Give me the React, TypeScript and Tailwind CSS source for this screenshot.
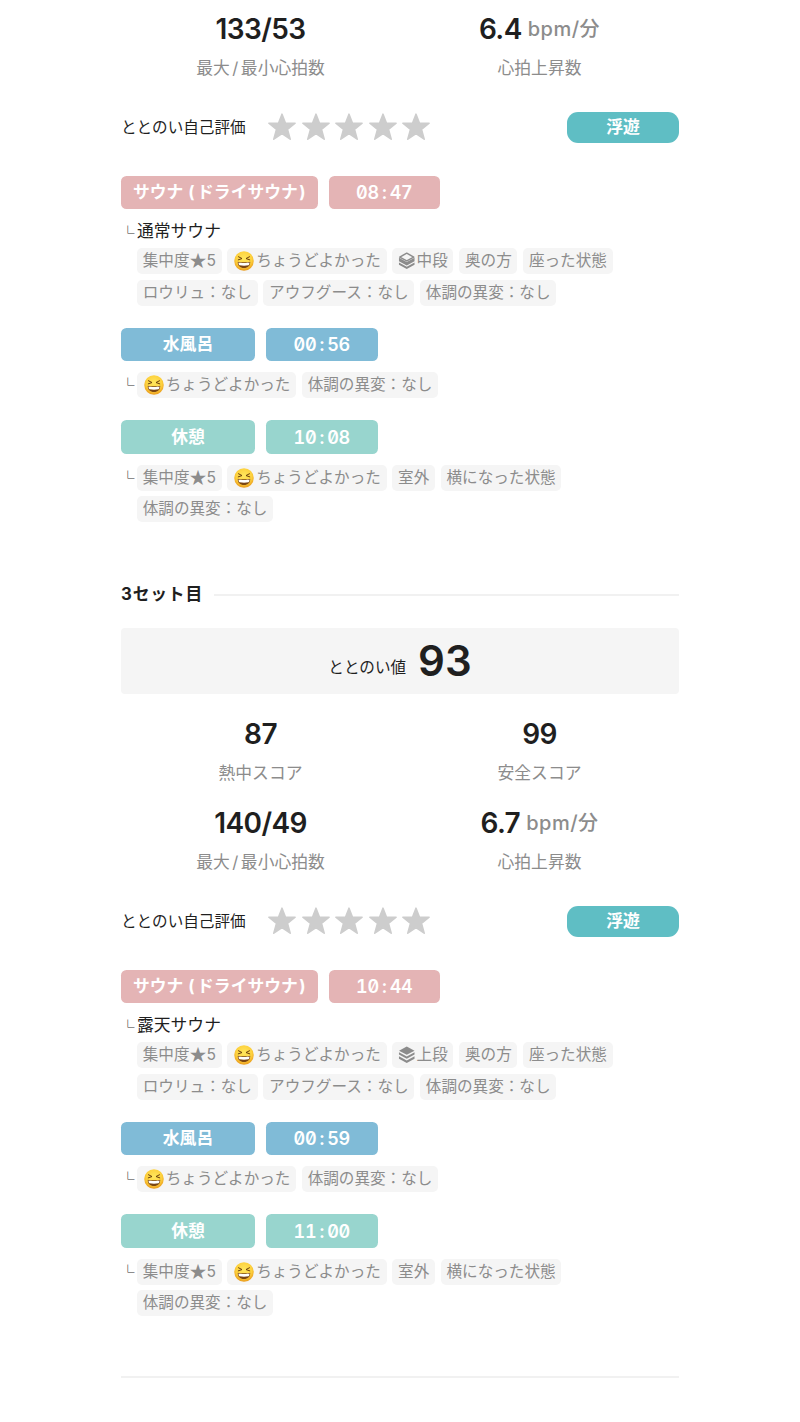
import React from 'react';

type Level = 'middle' | 'upper';

interface SaunaSet {
    title?: string;
    total?: number;
    passion?: number;
    safety?: number;
    heartRate: string;
    rise: string;
    sauna: { name: string; time: string; level: Level };
    waterTime: string;
    restTime: string;
}

const sets: SaunaSet[] = [
    {
        heartRate: '133/53',
        rise: '6.4',
        sauna: { name: '通常サウナ', time: '08:47', level: 'middle' },
        waterTime: '00:56',
        restTime: '10:08',
    },
    {
        title: '3セット目',
        total: 93,
        passion: 87,
        safety: 99,
        heartRate: '140/49',
        rise: '6.7',
        sauna: { name: '露天サウナ', time: '10:44', level: 'upper' },
        waterTime: '00:59',
        restTime: '11:00',
    },
];

const StarIcon = ({ className }: { className?: string }) => (
    <svg viewBox="0 0 28 28" className={className} fill="currentColor">
        <path d="M14 1.2l3.500 9h9.600l-7.600 6.200 2.700 9.800-8.200-5.600-8.200 5.600 2.700-9.800L.9 10.200h9.600z" stroke="currentColor" strokeWidth="1.600" strokeLinejoin="round" />
    </svg>
);

const LaughIcon = () => (
    <svg viewBox="0 0 40 40" className="w-5 h-5 ml-[1px] mr-[2px] shrink-0">
        <defs>
            <radialGradient id="face" cx="50%" cy="38%" r="62%">
                <stop offset="0" stopColor="#ffe75e" />
                <stop offset="0.65" stopColor="#fdd03c" />
                <stop offset="1" stopColor="#e99a1c" />
            </radialGradient>
        </defs>
        <circle cx="20" cy="20" r="19.5" fill="url(#face)" />
        <path d="M9 11.500l7 3.600-7.500 2.600M31 11.500l-7 3.600 7.500 2.600" fill="none" stroke="#6b3f0c" strokeWidth="2" strokeLinecap="round" strokeLinejoin="round" />
        <path d="M7.500 21.500c5 1.400 20 1.400 25 0 .6 7.500-5 12.500-12.500 12.500S6.900 29 7.500 21.500z" fill="#7a4512" />
        <path d="M9 23c5 1.300 17 1.300 22 0-.2 3.500-1 5-2 5.500-6 1.200-12 1.200-18 0-1-.5-1.800-2-2-5.500z" fill="#fff" />
    </svg>
);

// Stacked benches: every layer below the top one is solid, the top only when in use
const LevelIcon = ({ level }: { level: Level }) => (
    <svg viewBox="0 0 18 18" className="w-[17.500px] h-[17.500px] shrink-0" fill="currentColor">
        {level === 'upper' ? (
            <>
                <path d="M9 .6l8 4.200-8 4.300-8-4.300z" />
                <path d="M1 6.300l8 4.400 8-4.400v2.400l-8 4.400-8-4.400z" />
                <path d="M1 10.600l8 4.400 8-4.400v2.500l-8 4.400-8-4.400z" />
            </>
        ) : (
            <>
                <path d="M9 1.200l7.200 4-7.200 4-7.200-4z" fill="none" stroke="currentColor" strokeWidth="1.500" strokeLinejoin="round" />
                <path d="M1 6l8 4.400L17 6v3.400l-8 4.400-8-4.400z" />
                <path d="M1 10.900l8 4.400 8-4.400v2.300l-8 4.400-8-4.400z" />
            </>
        )}
    </svg>
);

const Stat = ({ value, unit, label }: { value: string | number; unit?: string; label: React.ReactNode }) => (
    <div className="flex flex-col items-center">
        <div className="h-[34px] flex items-center text-[28px] tracking-[-0.600px] font-semibold text-[#1f1f1f]">
            {value}
            {unit && <span className="ml-[6px] text-[20px] tracking-[0.500px] font-medium text-[#8c8c8c]">{unit}</span>}
        </div>
        <div className="mt-[10px] h-[24px] leading-[24px] text-[16.800px] text-[#8c8c8c]">{label}</div>
    </div>
);

const Tag = ({ children }: { children: React.ReactNode }) => (
    <span className="h-[26px] px-[5.700px] flex items-center rounded-[5px] bg-[#f5f5f5] text-[15.600px] leading-[26px] text-[#8c8c8c] whitespace-nowrap">
        {children}
    </span>
);

const Corner = ({ className }: { className: string }) => (
    <span className={`${className} w-[16px] h-[20px] shrink-0 leading-[20px] text-[13.500px] text-[#333]`}>└</span>
);

const Heading = ({ name, time, color, width }: { name: React.ReactNode; time: string; color: string; width: string }) => {
    const [minutes, seconds] = time.split(':');
    return (
        <div className="flex gap-[11px] h-[33.500px] text-white">
            <div className={`${color} ${width} pt-[1px] flex items-center justify-center rounded-[5.500px] text-[16.800px] font-bold whitespace-nowrap`}>{name}</div>
            <div className={`${color} w-[111.500px] pt-[1px] flex items-center justify-center rounded-[5.500px] font-semibold text-[18px] tracking-[-0.300px] [font-feature-settings:'tnum','zero']`}>
                {minutes}<span className="w-[11px] text-center">:</span>{seconds}
            </div>
        </div>
    );
};

const DrySauna = () => (
    <>
        サウナ
        <span className="ml-[5px] mr-[2.500px]">(</span>
        ドライサウナ
        <span className="ml-[1.500px]">)</span>
    </>
);

const Mood = () => <Tag><LaughIcon />ちょうどよかった</Tag>;
const Focus = () => (
    <Tag>
        集中度<span className="pb-[3px] text-[17px] leading-none font-['Noto_Sans_CJK_JP',sans-serif]">★</span>5
    </Tag>
);
const Health = () => <Tag>体調の異変：なし</Tag>;

const SetSection = ({ data }: { data: SaunaSet }) => (
    <section>
        {data.title && (
            <>
                <div className="flex items-center h-[26px]">
                    <h2 className="text-[16.800px] tracking-[0.800px] font-bold text-[#1f1f1f]">{data.title}</h2>
                    <div className="ml-[11px] mb-[1px] flex-1 h-[2px] bg-[#f1f1f1]" />
                </div>
                <div className="mt-[20px] mb-[23px] h-[66px] rounded-[4px] bg-[#f5f5f5] flex items-center justify-center">
                    <span className="pt-[13px] text-[15.600px]">ととのい値</span>
                    <span className="ml-[12px] text-[42px] leading-[66px] font-semibold">{data.total}</span>
                </div>
                <div className="grid grid-cols-2 mb-[21px]">
                    <Stat value={data.passion!} label="熱中スコア" />
                    <Stat value={data.safety!} label="安全スコア" />
                </div>
            </>
        )}
        <div className="grid grid-cols-2">
            <Stat value={data.heartRate} label={<>最大<span className="mx-[2.500px]">/</span>最小心拍数</>} />
            <Stat value={data.rise} unit="bpm/分" label="心拍上昇数" />
        </div>

        <div className="mt-[31.500px] h-[31px] flex items-center">
            <span className="pt-[1px] text-[15.600px]">ととのい自己評価</span>
            <div className="ml-[22.500px] flex gap-[5.500px] text-[#cdcdcd]">
                {[1, 2, 3, 4, 5].map(n => <StarIcon key={n} className="w-[28px] h-[28px]" />)}
            </div>
            <span className="ml-auto w-[112px] h-[31px] pt-[1px] flex items-center justify-center rounded-[11px] bg-[#5fbec4] text-[16.800px] font-bold text-white">浮遊</span>
        </div>

        <div className="mt-[33px]">
            <Heading name={<DrySauna />} time={data.sauna.time} color="bg-[#e4b4b5]" width="w-[196.500px]" />
            <div className="mt-[9px] h-[26px] flex text-[16.800px] leading-[26px]">
                <Corner className="mt-[5px]" />
                {data.sauna.name}
            </div>
            <div className="mt-[4px] ml-[16px] flex flex-wrap gap-x-[5.800px] gap-y-[5.500px]">
                <Focus />
                <Mood />
                <Tag><LevelIcon level={data.sauna.level} /><span className="ml-[1px]">{data.sauna.level === 'upper' ? '上段' : '中段'}</span></Tag>
                <Tag>奥の方</Tag>
                <Tag>座った状態</Tag>
                <Tag>ロウリュ：なし</Tag>
                <Tag>アウフグース：なし</Tag>
                <Health />
            </div>
        </div>

        <div className="mt-[22px]">
            <Heading name="水風呂" time={data.waterTime} color="bg-[#80bbd7]" width="w-[134px]" />
            <div className="mt-[11px] flex">
                <Corner className="mt-[3px] font-medium" />
                <div className="flex gap-[5.800px]">
                    <Mood />
                    <Health />
                </div>
            </div>
        </div>

        <div className="mt-[22px]">
            <Heading name="休憩" time={data.restTime} color="bg-[#98d5ce]" width="w-[134px]" />
            <div className="mt-[11px] flex">
                <Corner className="mt-[3px] font-medium" />
                <div className="flex flex-wrap gap-x-[5.800px] gap-y-[5.500px] w-[460px]">
                    <Focus />
                    <Mood />
                    <Tag>室外</Tag>
                    <Tag>横になった状態</Tag>
                    <Health />
                </div>
            </div>
        </div>
    </section>
);

const App: React.FC = () => (
    <main className="h-[1422px] overflow-hidden bg-white px-[121px] pt-[12px] text-[#1f1f1f] font-['Inter','Noto_Sans_CJK_JP',sans-serif]">
        <div className="flex flex-col gap-[60px]">
            {sets.map(set => <SetSection key={set.heartRate} data={set} />)}
            <div className="h-[2px] bg-[#f1f1f1]" />
        </div>
    </main>
);

export default App;
